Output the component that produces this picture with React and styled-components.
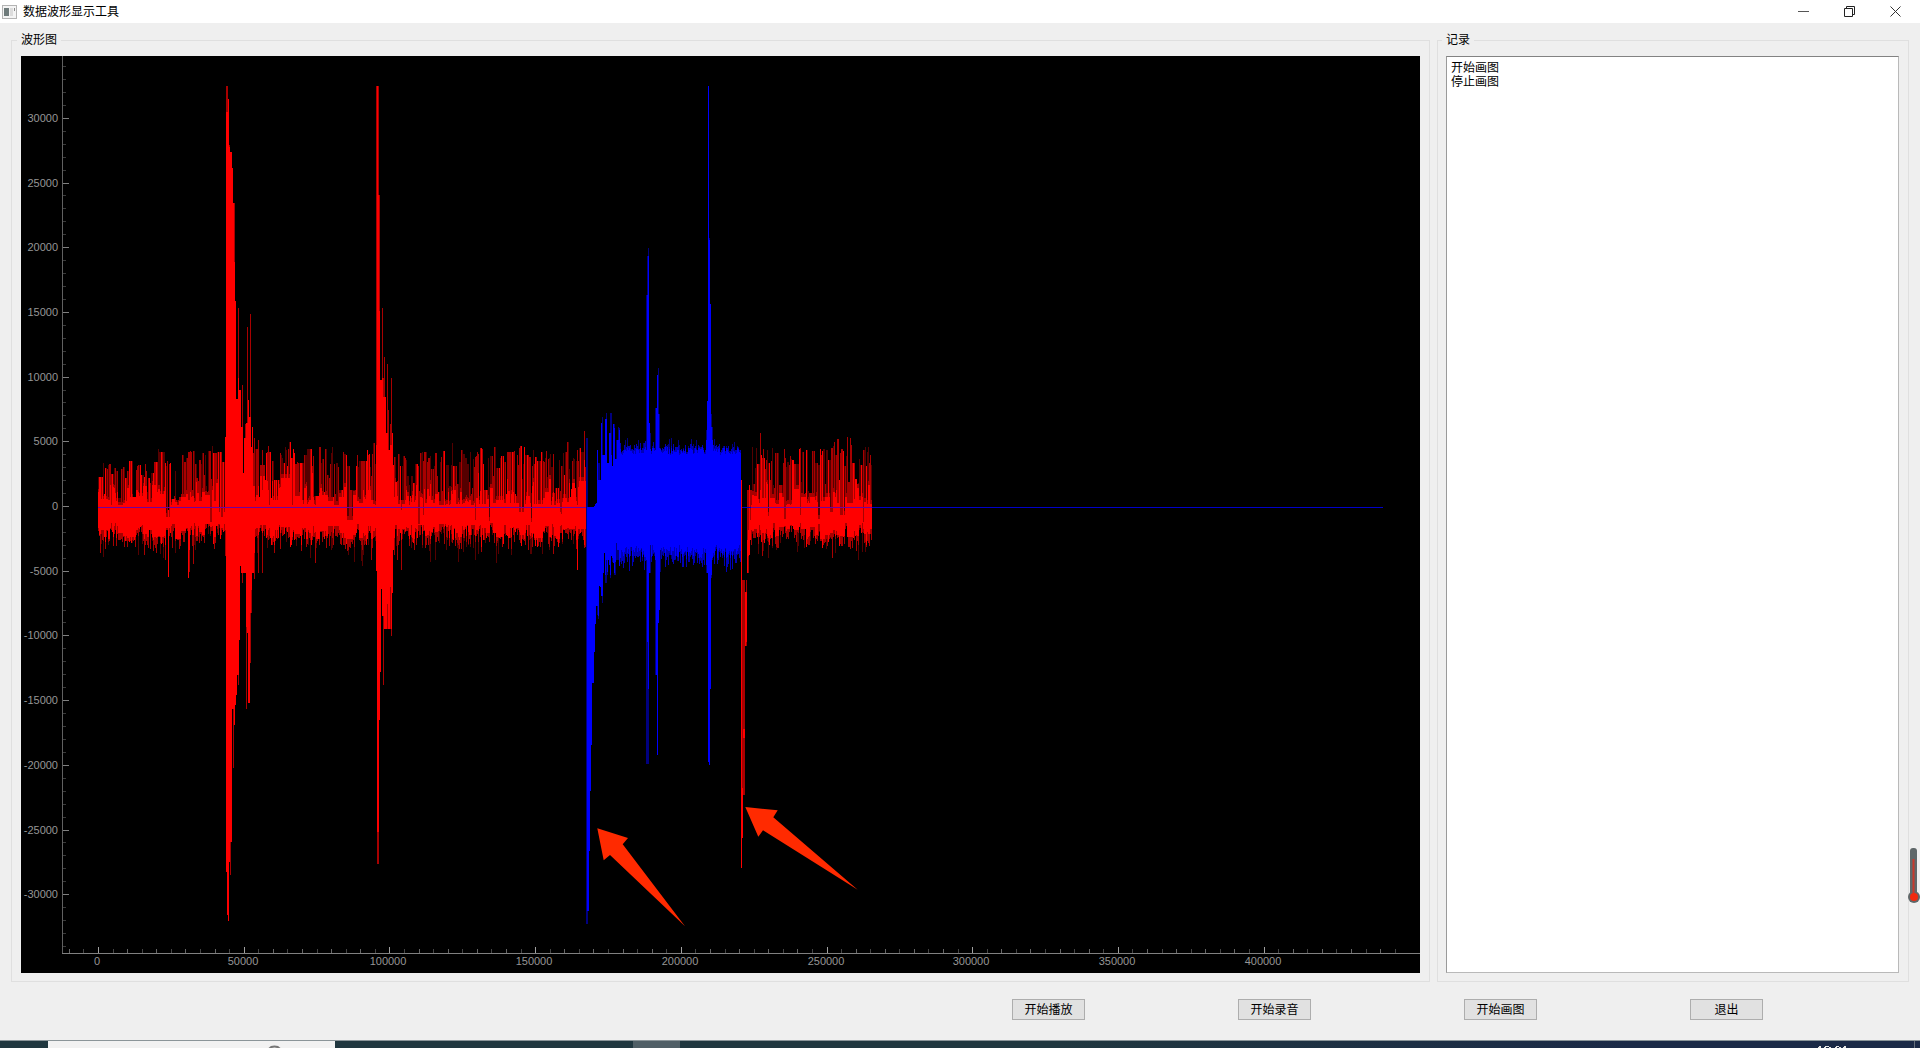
import React, { useMemo } from "react";
import styled, { createGlobalStyle } from "styled-components";

const GlobalStyle = createGlobalStyle`
  * {
    box-sizing: border-box;
  }

  body {
    margin: 0;
    background: #efefef;
    color: #000000;
    font-family: "Liberation Sans", "Noto Sans CJK SC", sans-serif;
    font-size: 12px;
    line-height: 14px;
  }
`;

const Window = styled.div`
  display: flex;
  flex-direction: column;
  min-height: 100vh;
`;

const TitleBar = styled.header`
  display: flex;
  align-items: center;
  height: 23px;
  padding: 0 2px;
  background: #ffffff;
`;

const Title = styled.h1`
  flex: 1;
  margin: 0;
  padding-left: 6px;
  font-size: 12px;
  font-weight: 400;
`;

const WindowButton = styled.button`
  display: flex;
  align-items: center;
  justify-content: center;
  width: 46px;
  height: 20px;
  padding: 0;
  border: none;
  background: transparent;
`;

const Panels = styled.main`
  flex: 1;
  display: grid;
  grid-template-columns: minmax(0, 1fr) 472px;
  gap: 7px;
  padding: 10px 11px 0;
`;

const Group = styled.fieldset`
  display: flex;
  min-width: 0;
  margin: 0;
  padding: 9px 9px 8px ${(props) => props.$left}px;
  border: 1px solid #dfdfdf;
`;

const GroupTitle = styled.legend`
  padding: 0 4px;
  margin-left: -4px;
  height: 14px;
`;

const Plot = styled.svg`
  display: block;
  flex: 1;
  min-width: 0;
  width: 100%;
  background: #000000;
`;

const AxisLabel = styled.text`
  fill: #969696;
  font-family: "Liberation Sans", sans-serif;
  font-size: 11px;
`;

const Log = styled.textarea`
  flex: 1;
  min-width: 0;
  padding: 4px;
  border: 1px solid #b9b9b9;
  border-top-color: #828282;
  border-left-color: #9a9a9a;
  background: #ffffff;
  color: #000000;
  font: inherit;
  resize: none;
  outline: none;
`;

const Actions = styled.div`
  display: flex;
  justify-content: flex-end;
  gap: 153px;
  padding: 17px 157px 20px 11px;
`;

const ActionButton = styled.button`
  width: 73px;
  height: 21px;
  padding: 0;
  border: 1px solid #adadad;
  background: #e1e1e1;
  color: #000000;
  font: inherit;
`;

const Taskbar = styled.footer`
  display: flex;
  height: 8px;
  padding-left: 48px;
  border-top: 1px solid #8b9599;
  background: linear-gradient(90deg, #20373f 0%, #20373f 55%, #1b2a47 85%);
`;

const SearchBox = styled.div`
  display: flex;
  width: 287px;
  padding: 4px 0 0 220px;
  background: #f2f2f2;
`;

const TaskItem = styled.div`
  width: 47px;
  margin-left: 298px;
  background: #505f66;
`;

const Tray = styled.svg`
  margin-left: auto;
`;

const Thermometer = styled.svg`
  position: fixed;
  right: 0;
  bottom: 144px;
`;

const ZERO_X = 98;
const ZERO_Y = 507;
const AXIS_X = 62;
const AXIS_Y = 953;

const xOf = (value) => ZERO_X + (value / 50000) * 145.7;
const yOf = (value) => ZERO_Y - 1 - (value / 5000) * 64.7;

// x, top, bottom, faint top, faint bottom
const RED_BURSTS = [
  [168, 510, 577, 510, 577],
  [188, 500, 578, 452, 578],
  [189, 500, 550, 452, 572],
  [225, 437, 530, 437, 556],
  [226, 112, 872, 86, 872],
  [227, 112, 915, 86, 915],
  [228, 99, 921, 99, 921],
  [229, 147, 862, 145, 862],
  [230, 152, 842, 152, 875],
  [231, 152, 842, 152, 842],
  [232, 168, 709, 168, 709],
  [233, 203, 709, 203, 768],
  [234, 262, 725, 203, 725],
  [235, 301, 705, 301, 705],
  [236, 399, 695, 399, 695],
  [237, 399, 675, 399, 675],
  [238, 378, 675, 308, 685],
  [239, 390, 640, 390, 640],
  [240, 390, 566, 390, 566],
  [241, 427, 573, 427, 573],
  [242, 427, 573, 385, 583],
  [243, 473, 573, 473, 573],
  [244, 438, 573, 438, 573],
  [245, 438, 573, 424, 573],
  [246, 423, 627, 423, 709],
  [247, 423, 633, 327, 633],
  [248, 400, 703, 400, 703],
  [249, 417, 703, 417, 703],
  [250, 417, 613, 314, 663],
  [251, 447, 590, 447, 613],
  [252, 427, 573, 427, 573],
  [253, 486, 573, 453, 573],
  [254, 486, 553, 438, 579],
  [258, 486, 535, 440, 573],
  [262, 490, 533, 450, 573],
  [268, 490, 530, 446, 540],
  [376, 445, 571, 86, 571],
  [377, 86, 832, 86, 864],
  [378, 195, 832, 86, 864],
  [379, 311, 720, 195, 720],
  [380, 380, 672, 380, 672],
  [381, 380, 589, 380, 589],
  [382, 378, 616, 308, 616],
  [383, 397, 616, 378, 685],
  [384, 397, 629, 357, 629],
  [385, 397, 629, 397, 629],
  [386, 433, 629, 433, 629],
  [387, 433, 604, 364, 629],
  [388, 450, 629, 410, 629],
  [389, 450, 629, 450, 629],
  [390, 445, 587, 424, 629],
  [391, 445, 629, 378, 636],
  [392, 433, 593, 433, 593],
  [393, 465, 550, 465, 550],
  [401, 510, 540, 500, 570],
  [577, 505, 570, 450, 570],
  [584, 460, 545, 431, 548],
  [741, 480, 868, 480, 868],
  [742, 788, 838, 580, 838],
  [743, 729, 738, 580, 795],
  [744, 729, 738, 580, 795],
  [745, 592, 646, 592, 646],
  [746, 592, 642, 580, 646],
  [747, 540, 573, 490, 573],
  [748, 530, 556, 490, 573],
  [749, 485, 555, 485, 555],
  [750, 520, 540, 490, 540],
  [751, 505, 530, 490, 545],
  [760, 490, 530, 433, 535],
];

const BLUE_BURSTS = [
  [586, 507, 507, 438, 924],
  [587, 507, 911, 438, 924],
  [588, 507, 911, 507, 911],
  [589, 507, 851, 507, 851],
  [590, 507, 791, 507, 791],
  [591, 507, 745, 507, 745],
  [592, 507, 683, 507, 683],
  [593, 507, 683, 507, 683],
  [594, 506, 652, 506, 652],
  [595, 504, 624, 504, 624],
  [596, 503, 606, 503, 606],
  [597, 450, 606, 450, 615],
  [598, 480, 616, 463, 619],
  [599, 480, 586, 463, 586],
  [600, 480, 587, 480, 587],
  [601, 423, 596, 423, 596],
  [602, 455, 596, 417, 603],
  [603, 455, 573, 455, 573],
  [604, 455, 553, 455, 553],
  [605, 419, 575, 419, 583],
  [606, 419, 560, 413, 583],
  [607, 463, 572, 463, 575],
  [608, 463, 560, 463, 560],
  [609, 433, 565, 433, 565],
  [610, 433, 575, 413, 578],
  [611, 455, 556, 413, 556],
  [612, 466, 558, 466, 562],
  [613, 424, 563, 424, 563],
  [614, 428, 573, 424, 575],
  [615, 459, 562, 459, 575],
  [616, 459, 543, 440, 560],
  [617, 440, 550, 440, 560],
  [618, 440, 550, 427, 560],
  [619, 430, 566, 428, 566],
  [646, 450, 560, 295, 764],
  [647, 295, 642, 256, 764],
  [648, 256, 689, 248, 764],
  [649, 423, 573, 423, 573],
  [650, 449, 545, 433, 573],
  [655, 450, 560, 408, 675],
  [656, 408, 675, 408, 675],
  [657, 375, 755, 375, 755],
  [658, 414, 623, 368, 623],
  [659, 448, 610, 414, 610],
  [660, 449, 550, 448, 572],
  [706, 440, 565, 430, 573],
  [707, 401, 573, 401, 573],
  [708, 86, 762, 86, 762],
  [709, 240, 765, 238, 765],
  [710, 304, 689, 304, 689],
  [711, 427, 575, 414, 578],
  [712, 440, 558, 427, 560],
];

// small seeded generator, the noise floor stays the same on every render
const createRandom = (seed) => {
  let state = seed;
  return () => {
    state = (state * 1664525 + 1013904223) % 4294967296;
    return state / 4294967296;
  };
};

const segment = (x, from, to) => `M${x}.5 ${Math.round(from)}V${Math.round(to)}`;

const buildRed = () => {
  const random = createRandom(29);
  const bursts = new Map(RED_BURSTS.map((row) => [row[0], row]));
  const layers = { faint: "", half: "", full: "" };
  let reach = 40;
  let floor = 14;
  let dip = 24;
  for (let x = 98; x < 872; x++) {
    if (x >= 586 && x < 741) continue;
    if (bursts.has(x)) {
      const [, top, bottom, faintTop, faintBottom] = bursts.get(x);
      layers.half += segment(x, faintTop, faintBottom);
      layers.full += segment(x, top, bottom);
      continue;
    }
    // neighbouring columns often share a peak, with short gaps in between
    if (random() > 0.4) {
      reach = random() < 0.24 ? 8 + random() * 24 : 38 + random() * 22 + (random() > 0.9 ? 10 : 0);
    }
    if (random() > 0.5) {
      floor = random() > 0.9 ? -4 - random() * 14 : 2 + random() * random() * 34;
      dip = 16 + random() * 17;
    }
    const level = x < 150 ? 0.75 : x < 190 ? 0.88 : 1;
    const kind = random();
    const halfTop = kind < 0.6 ? reach : floor + 4;
    const fullTop = kind < 0.16 ? reach : Math.min(floor, reach);
    const halfBottom = dip + random() * 12;
    const faintBottom = halfBottom + (random() > 0.75 ? random() * 20 : 0);
    layers.faint += segment(x, ZERO_Y - reach * level, ZERO_Y + faintBottom);
    layers.half += segment(x, ZERO_Y - halfTop * level, ZERO_Y + (kind < 0.3 ? faintBottom : halfBottom));
    layers.full += segment(x, ZERO_Y - fullTop * level, ZERO_Y + (kind < 0.16 ? halfBottom : dip));
  }
  return layers;
};

const buildBlue = () => {
  const random = createRandom(7);
  const bursts = new Map(BLUE_BURSTS.map((row) => [row[0], row]));
  const layers = { faint: "", half: "", full: "" };
  for (let x = 586; x < 741; x++) {
    if (bursts.has(x)) {
      const [, top, bottom, faintTop, faintBottom] = bursts.get(x);
      layers.faint += segment(x, faintTop, faintBottom);
      layers.full += segment(x, top, bottom);
      continue;
    }
    const top = 447 + random() * 8;
    const bottom = 545 + random() * 14;
    const tip = random();
    layers.half += segment(x, top - random() * 6, bottom + random() * 14);
    layers.faint += segment(x, top - (tip > 0.85 ? 10 : 2), bottom + 4);
    layers.full += segment(x, top, bottom);
  }
  return layers;
};

const range = (from, to, step) => {
  const values = [];
  for (let value = from; value <= to; value += step) values.push(value);
  return values;
};

const Waveform = () => {
  const red = useMemo(buildRed, []);
  const blue = useMemo(buildBlue, []);
  return (
    <Plot viewBox="21 56 1399 917" role="img" aria-label="波形图">
      <g shapeRendering="crispEdges" fill="none">
        <path d={red.faint} stroke="#550000" />
        <path d={red.half} stroke="#a80000" />
        <path d={red.full} stroke="#ff0000" />
        <path d={blue.faint} stroke="#000080" />
        <path d={blue.half} stroke="#0000b8" />
        <path d={blue.full} stroke="#0000ff" />
        <path d="M98 507.5H586" stroke="#7000a0" />
        <path d="M751 507.5H872" stroke="#7000a0" />
        <path d="M742 507.5H751M872 507.5H1383" stroke="#0000c8" />
      </g>

      <g shapeRendering="crispEdges">
        {range(-34000, 34000, 1000).map((value) => (
          <path
            key={value}
            d={`M${AXIS_X} ${Math.round(yOf(value))}.5h${value % 5000 ? 4 : 7}`}
            stroke={value % 5000 ? "#3a3a3a" : "#808080"}
          />
        ))}
        {range(-10000, 445000, 5000).map((value) => (
          <path
            key={value}
            d={`M${Math.round(xOf(value))}.5 ${AXIS_Y}v${value % 50000 ? -4 : -6}`}
            stroke={value % 50000 ? (value % 10000 ? "#444444" : "#666666") : "#a0a0a0"}
          />
        ))}
        <path d={`M${AXIS_X}.5 56V${AXIS_Y}`} stroke="#606060" />
        <path d={`M${AXIS_X} ${AXIS_Y}.5H1420`} stroke="#808080" />
      </g>

      {range(-30000, 30000, 5000).map((value) => (
        <AxisLabel key={value} x={58} y={Math.round(yOf(value)) + 4} textAnchor="end">
          {value}
        </AxisLabel>
      ))}
      {range(0, 400000, 50000).map((value) => (
        <AxisLabel key={value} x={Math.round(xOf(value)) - 1} y={965} textAnchor="middle">
          {value}
        </AxisLabel>
      ))}

      <g fill="#ff2a00">
        <path d="M597.3 828.3L628 838L622.7 844.3L685 926.3L610 855L603.7 860.3Z" />
        <path d="M745.3 807L777.7 810.3L773.3 817.3L857.7 889.7L763 830.3L758.3 836.7Z" />
      </g>
    </Plot>
  );
};

const actions = ["开始播放", "开始录音", "开始画图", "退出"];

const App = () => {
  return (
    <>
      <GlobalStyle />
      <Window>
        <TitleBar>
          <svg width="15" height="14" viewBox="0 0 15 14" aria-hidden="true">
            <rect x="0.5" y="0.5" width="14" height="13" fill="#f4f4f4" stroke="#b4b4b4" />
            <rect x="2" y="3" width="5" height="8" fill="#6f7b7b" />
            <rect x="8" y="3" width="3" height="8" fill="#dcdcdc" />
            <rect x="12" y="3" width="1" height="3" fill="#8a8a8a" />
          </svg>
          <Title>数据波形显示工具</Title>
          <WindowButton aria-label="最小化">
            <svg width="11" height="11" viewBox="0 0 11 11">
              <path d="M0 5.5H11" stroke="#555555" />
            </svg>
          </WindowButton>
          <WindowButton aria-label="还原">
            <svg width="11" height="11" viewBox="0 0 11 11" fill="none" stroke="#222222">
              <path d="M0.5 2.5H8.5V10.5H0.5ZM2.5 2.5V0.5H10.5V8.5H8.5" />
            </svg>
          </WindowButton>
          <WindowButton aria-label="关闭">
            <svg width="11" height="11" viewBox="0 0 11 11">
              <path d="M0.5 0.5L10.5 10.5M10.5 0.5L0.5 10.5" stroke="#333333" />
            </svg>
          </WindowButton>
        </TitleBar>

        <Panels>
          <Group $left={9}>
            <GroupTitle>波形图</GroupTitle>
            <Waveform />
          </Group>
          <Group $left={8}>
            <GroupTitle>记录</GroupTitle>
            <Log aria-label="记录" readOnly value={"开始画图\n停止画图"} />
          </Group>
        </Panels>

        <Actions>
          {actions.map((label) => (
            <ActionButton key={label} type="button">
              {label}
            </ActionButton>
          ))}
        </Actions>

        <Taskbar>
          <SearchBox>
            <svg width="14" height="3" viewBox="0 0 14 3" aria-hidden="true">
              <path d="M1 4A6 4 0 0 1 12 4" fill="none" stroke="#777777" strokeWidth="2" />
            </svg>
          </SearchBox>
          <TaskItem />
          <Tray width="104" height="7" viewBox="0 0 104 7" aria-hidden="true">
            <path
              d="M3 5.5h2M9 5.5h4M20 5.5h3M28 5.5h2M2 6.5h3M8 6.5h2M13 6.5h2M19 6.5h2M23 6.5h2M27 6.5h3"
              stroke="#e6e6e6"
            />
            <path d="M98.5 0V7" stroke="#66707c" />
          </Tray>
        </Taskbar>
      </Window>

      <Thermometer width="13" height="57" viewBox="0 0 13 57" aria-hidden="true">
        <rect x="3" y="1" width="7" height="50" rx="3" fill="#5f6769" />
        <circle cx="7" cy="50" r="6" fill="#5f6769" />
        <path d="M6.5 12V48" stroke="#c8382c" strokeWidth="2" />
        <circle cx="7" cy="50" r="4" fill="#f02a10" />
      </Thermometer>
    </>
  );
};

export default App;
